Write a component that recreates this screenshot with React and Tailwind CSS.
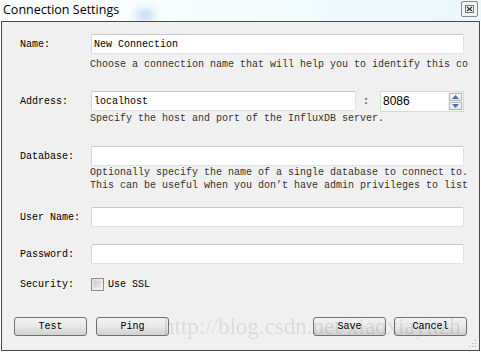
import { useState } from 'react'

const mono = { fontFamily: '"Liberation Mono", "DejaVu Sans Mono", monospace' }

function Field({ label, value, className = '' }) {
  return (
    <div className={`flex items-center h-[20px] ${className}`}>
      <span className="w-[71px] shrink-0 text-[10px] text-black">{label}</span>
      <input
        readOnly
        value={value || ''}
        className="flex-1 h-[20px] px-[2px] bg-white border border-[#dfe3e8] border-t-[#c4c7cc] border-l-[#d2d5da] rounded-[2px] text-[10px] text-black outline-none"
        style={mono}
      />
    </div>
  )
}

function Help({ children, className = '' }) {
  return (
    <p className={`ml-[70px] mr-[-10px] text-[10px] leading-[13px] text-[#333] whitespace-nowrap overflow-hidden ${className}`}>
      {children}
    </p>
  )
}

function Btn({ children }) {
  return (
    <button className="w-[73px] h-[19px] border border-[#707070] rounded-[3px] bg-gradient-to-b from-[#f3f3f3] via-[#e8e8e8] to-[#d0d0d0] text-[10px] text-black leading-none">
      {children}
    </button>
  )
}

function App() {
  const [ssl, setSsl] = useState(false)

  return (
    <div className="relative w-[481px] h-[352px] bg-white overflow-hidden" style={mono}>
      {/* title bar */}
      <div className="relative flex items-center h-[21px] pl-[3px] bg-gradient-to-r from-white via-[#f4fcfd] to-[#ebf8fc]">
        <span className="text-[12.5px] text-black leading-none" style={{ fontFamily: '"Open Sans", "Noto Sans", sans-serif' }}>
          Connection Settings
        </span>
        <div className="absolute left-[136px] top-[10px] w-[18px] h-[10px] rounded-full bg-[#b8d4f0] blur-[4px]" />
        <div className="absolute right-[3px] top-[1px] w-[17px] h-[16px] border border-[#8a8a8a] rounded-[2px] bg-[#f4f4f4] flex items-center justify-center">
          <svg width="9" height="8" viewBox="0 0 9 8">
            <rect x="0.5" y="0.5" width="8" height="7" fill="none" stroke="#777" />
            <path d="M2 2 L7 6 M7 2 L2 6" stroke="#333" strokeWidth="1.2" />
          </svg>
        </div>
      </div>

      {/* dialog body */}
      <div className="relative ml-[1px] w-[479px] h-[330px] border border-[#4a4a4a] bg-[#f0f0f0] flex flex-col">
        <div className="flex flex-col pl-[18px] pr-[15px]">
          <Field label="Name:" value="New Connection" className="mt-[12px]" />
          <Help className="mt-[4px]">Choose a connection name that will help you to identify this co</Help>

          <div className="flex items-center h-[20px] mt-[20px]">
            <span className="w-[71px] shrink-0 text-[10px] text-black">Address:</span>
            <input
              readOnly
              value="localhost"
              className="w-[265px] h-[20px] px-[2px] bg-white border border-[#dfe3e8] border-t-[#c4c7cc] border-l-[#d2d5da] rounded-[2px] text-[10px] text-black outline-none"
              style={mono}
            />
            <span className="w-[24px] pr-[4px] text-center text-[11px] font-bold text-[#7a5a20]">:</span>
            <div className="flex-1 flex h-[21px] border border-[#c6e6c6] bg-white">
              <span className="flex-1 pl-[2px] text-[12px] leading-[18px] text-black" style={{ fontFamily: '"Liberation Sans", sans-serif' }}>8086</span>
              <div className="w-[15px] flex flex-col gap-[1px] p-[1px] bg-[#f0f0f0]">
                <div className="flex-1 flex items-center justify-center border border-[#b6b6b6] bg-gradient-to-b from-[#f8f8f8] to-[#e4e4e4]">
                  <svg width="7" height="4" viewBox="0 0 7 4"><path d="M3.5 0 L7 4 L0 4 Z" fill="#4a6fa8" /></svg>
                </div>
                <div className="flex-1 flex items-center justify-center border border-[#b6b6b6] bg-gradient-to-b from-[#f8f8f8] to-[#e4e4e4]">
                  <svg width="7" height="4" viewBox="0 0 7 4"><path d="M0 0 L7 0 L3.5 4 Z" fill="#4a6fa8" /></svg>
                </div>
              </div>
            </div>
          </div>
          <Help className="mt-[1px]">Specify the host and port of the InfluxDB server.</Help>

          <Field label="Database:" className="mt-[21px]" />
          <Help>Optionally specify the name of a single database to connect to.</Help>
          <Help>This can be useful when you don’t have admin privileges to list</Help>

          <Field label="User Name:" className="mt-[15px]" />
          <Field label="Password:" className="mt-[17px]" />

          <div className="flex items-center h-[14px] mt-[13px]">
            <span className="w-[71px] shrink-0 text-[10px] text-black">Security:</span>
            <label className="flex items-center gap-[4px] text-[10px] text-black">
              <span
                onClick={() => setSsl(!ssl)}
                className="w-[13px] h-[13px] border border-[#8e8f8f] bg-gradient-to-br from-[#dcdcdc] to-[#f6f6f6] p-[2px]"
              >
                <span className="block w-full h-full bg-gradient-to-br from-[#cbcbcb] to-[#ededed]" />
              </span>
              Use SSL
            </label>
          </div>
        </div>

        <div className="flex items-center mt-[26px] pl-[12px] pr-[12px]">
          <div className="flex gap-[9px]">
            <Btn>Test</Btn>
            <Btn>Ping</Btn>
          </div>
          <div className="flex gap-[8px] ml-auto">
            <Btn>Save</Btn>
            <Btn>Cancel</Btn>
          </div>
        </div>

        <svg className="absolute right-[2px] bottom-[2px]" width="8" height="8" viewBox="0 0 8 8">
          <g fill="#a8a8a8">
            <rect x="6" y="0" width="1" height="1" />
            <rect x="3" y="3" width="1" height="1" />
            <rect x="6" y="3" width="1" height="1" />
            <rect x="0" y="6" width="1" height="1" />
            <rect x="3" y="6" width="1" height="1" />
            <rect x="6" y="6" width="1" height="1" />
          </g>
        </svg>
      </div>

      {/* watermark */}
      <div
        className="absolute left-[163px] top-[315px] text-[23px] leading-none text-black/10 whitespace-nowrap pointer-events-none"
        style={{ fontFamily: '"Liberation Serif", serif' }}
      >
        http://blog.csdn.net/xiaoxiayitzh
      </div>
    </div>
  )
}

export default App
